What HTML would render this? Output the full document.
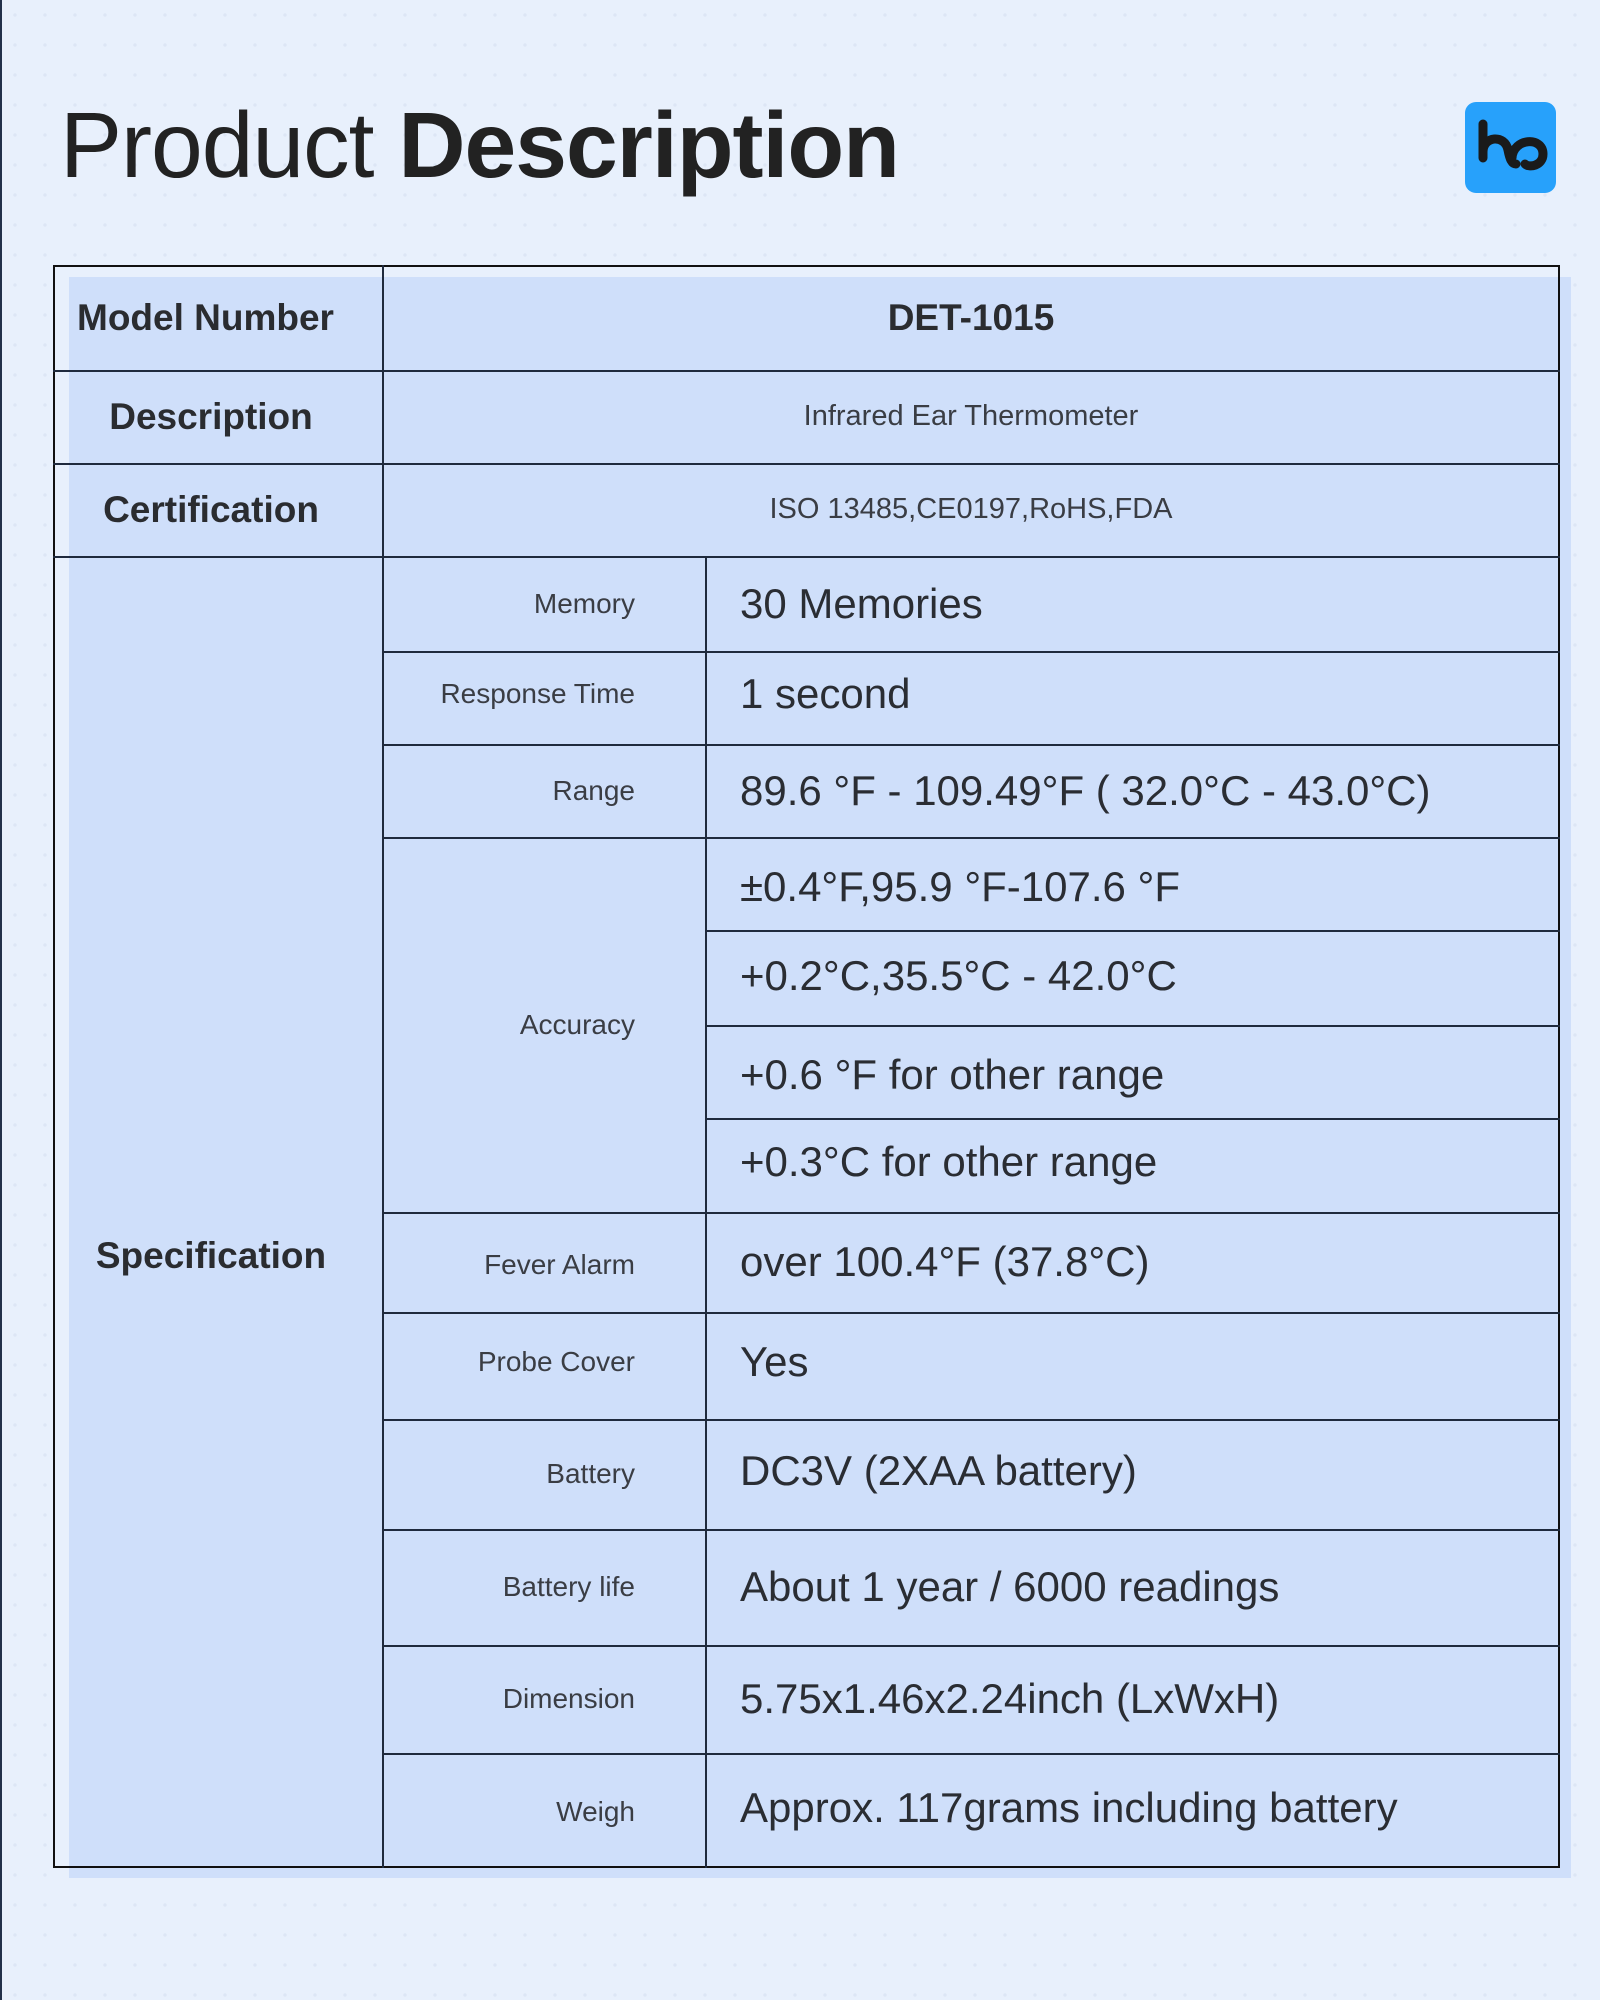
<!DOCTYPE html>
<html><head><meta charset="utf-8"><style>
*{margin:0;padding:0;box-sizing:border-box}
body{width:1600px;height:2000px;position:relative;overflow:hidden;background:#e8f0fc;
background-image:radial-gradient(circle,#dde6f5 1.5px,transparent 2px);background-size:30px 30px;
font-family:"Liberation Sans",sans-serif;color:#2a2d33;border-left:2px solid #22304a}
.t{position:absolute;left:58px;top:92px;font-size:93px;letter-spacing:-1px;color:#222}
.t b{font-weight:bold}
.logo{position:absolute;left:1463px;top:102px;width:91px;height:91px;border-radius:11px;background:#27a1fb}
.fill{position:absolute;left:67px;top:277px;width:1502px;height:1601px;background:#cfdffa}
.tab{position:absolute;left:51px;top:265px;width:1507px;height:1603px;border:2px solid #111}
.h{position:absolute;height:1.5px;background:#1f2a3d}
.v{position:absolute;width:1.5px;background:#1f2a3d}
.c{position:absolute;display:flex;align-items:center}
.k{font-weight:bold;font-size:37px;justify-content:center;color:#2a2c30}
.l{font-size:28px;justify-content:flex-end;padding-right:70px;color:#3a3d44}
.val{font-size:42px;padding-left:35px;color:#2a2d33}
.m{font-size:29px;justify-content:center;color:#3a3d44}
</style></head><body>
<div class="t">Product <b>Description</b></div>
<div class="logo"><svg width="91" height="91" viewBox="0 0 91 91"><path d="M18 22 V56 M18 50 C18 34 40 32 43 48 C45 58 47 62 51 62 M47 56 C48 36 78 34 78 52 C78 64 64 66 60 62" fill="none" stroke="#1a1a1a" stroke-width="9" stroke-linecap="round"/></svg></div>
<div class="fill"></div>
<div class="tab"></div>
<div class="v" style="left:380px;top:265px;height:1603px"></div>
<div class="v" style="left:703px;top:556px;height:1312px"></div>
<div class="h" style="left:51px;top:370px;width:1507px"></div>
<div class="h" style="left:51px;top:463px;width:1507px"></div>
<div class="h" style="left:51px;top:556px;width:1507px"></div>
<div class="h" style="left:380px;top:651px;width:1178px"></div>
<div class="h" style="left:380px;top:744px;width:1178px"></div>
<div class="h" style="left:380px;top:837px;width:1178px"></div>
<div class="h" style="left:703px;top:930px;width:855px"></div>
<div class="h" style="left:703px;top:1025px;width:855px"></div>
<div class="h" style="left:703px;top:1118px;width:855px"></div>
<div class="h" style="left:380px;top:1212px;width:1178px"></div>
<div class="h" style="left:380px;top:1312px;width:1178px"></div>
<div class="h" style="left:380px;top:1419px;width:1178px"></div>
<div class="h" style="left:380px;top:1529px;width:1178px"></div>
<div class="h" style="left:380px;top:1645px;width:1178px"></div>
<div class="h" style="left:380px;top:1753px;width:1178px"></div>

<div class="c k" style="left:51px;top:265px;width:316px;height:105px;justify-content:flex-start;padding-left:24px">Model Number</div>
<div class="c k" style="left:380px;top:265px;width:1178px;height:105px">DET-1015</div>
<div class="c k" style="left:51px;top:370px;width:316px;height:93px">Description</div>
<div class="c m" style="left:380px;top:370px;width:1178px;height:93px">Infrared Ear Thermometer</div>
<div class="c k" style="left:51px;top:463px;width:316px;height:93px">Certification</div>
<div class="c m" style="left:380px;top:463px;width:1178px;height:93px">ISO 13485,CE0197,RoHS,FDA</div>
<div class="c k" style="left:51px;top:556px;width:316px;height:1400px">Specification</div>

<div class="c l" style="left:380px;top:556px;width:323px;height:95px">Memory</div>
<div class="c val" style="left:703px;top:556px;height:95px">30 Memories</div>
<div class="c l" style="left:380px;top:651px;width:323px;height:86px">Response Time</div>
<div class="c val" style="left:703px;top:651px;height:86px">1 second</div>
<div class="c l" style="left:380px;top:744px;width:323px;height:93px">Range</div>
<div class="c val" style="left:703px;top:744px;height:93px">89.6 °F - 109.49°F ( 32.0°C - 43.0°C)</div>
<div class="c l" style="left:380px;top:837px;width:323px;height:375px">Accuracy</div>
<div class="c val" style="left:703px;top:837px;height:100px">±0.4°F,95.9 °F-107.6 °F</div>
<div class="c val" style="left:703px;top:930px;height:92px">+0.2°C,35.5°C - 42.0°C</div>
<div class="c val" style="left:703px;top:1025px;height:100px">+0.6 °F for other range</div>
<div class="c val" style="left:703px;top:1118px;height:88px">+0.3°C for other range</div>
<div class="c l" style="left:380px;top:1212px;width:323px;height:105px">Fever Alarm</div>
<div class="c val" style="left:703px;top:1212px;height:100px">over 100.4°F (37.8°C)</div>
<div class="c l" style="left:380px;top:1312px;width:323px;height:100px">Probe Cover</div>
<div class="c val" style="left:703px;top:1312px;height:100px">Yes</div>
<div class="c l" style="left:380px;top:1419px;width:323px;height:110px">Battery</div>
<div class="c val" style="left:703px;top:1419px;height:104px">DC3V (2XAA battery)</div>
<div class="c l" style="left:380px;top:1529px;width:323px;height:116px">Battery life</div>
<div class="c val" style="left:703px;top:1529px;height:116px">About 1 year / 6000 readings</div>
<div class="c l" style="left:380px;top:1645px;width:323px;height:108px">Dimension</div>
<div class="c val" style="left:703px;top:1645px;height:108px">5.75x1.46x2.24inch (LxWxH)</div>
<div class="c l" style="left:380px;top:1753px;width:323px;height:118px">Weigh</div>
<div class="c val" style="left:703px;top:1753px;height:110px">Approx. 117grams including battery</div>
</body></html>
